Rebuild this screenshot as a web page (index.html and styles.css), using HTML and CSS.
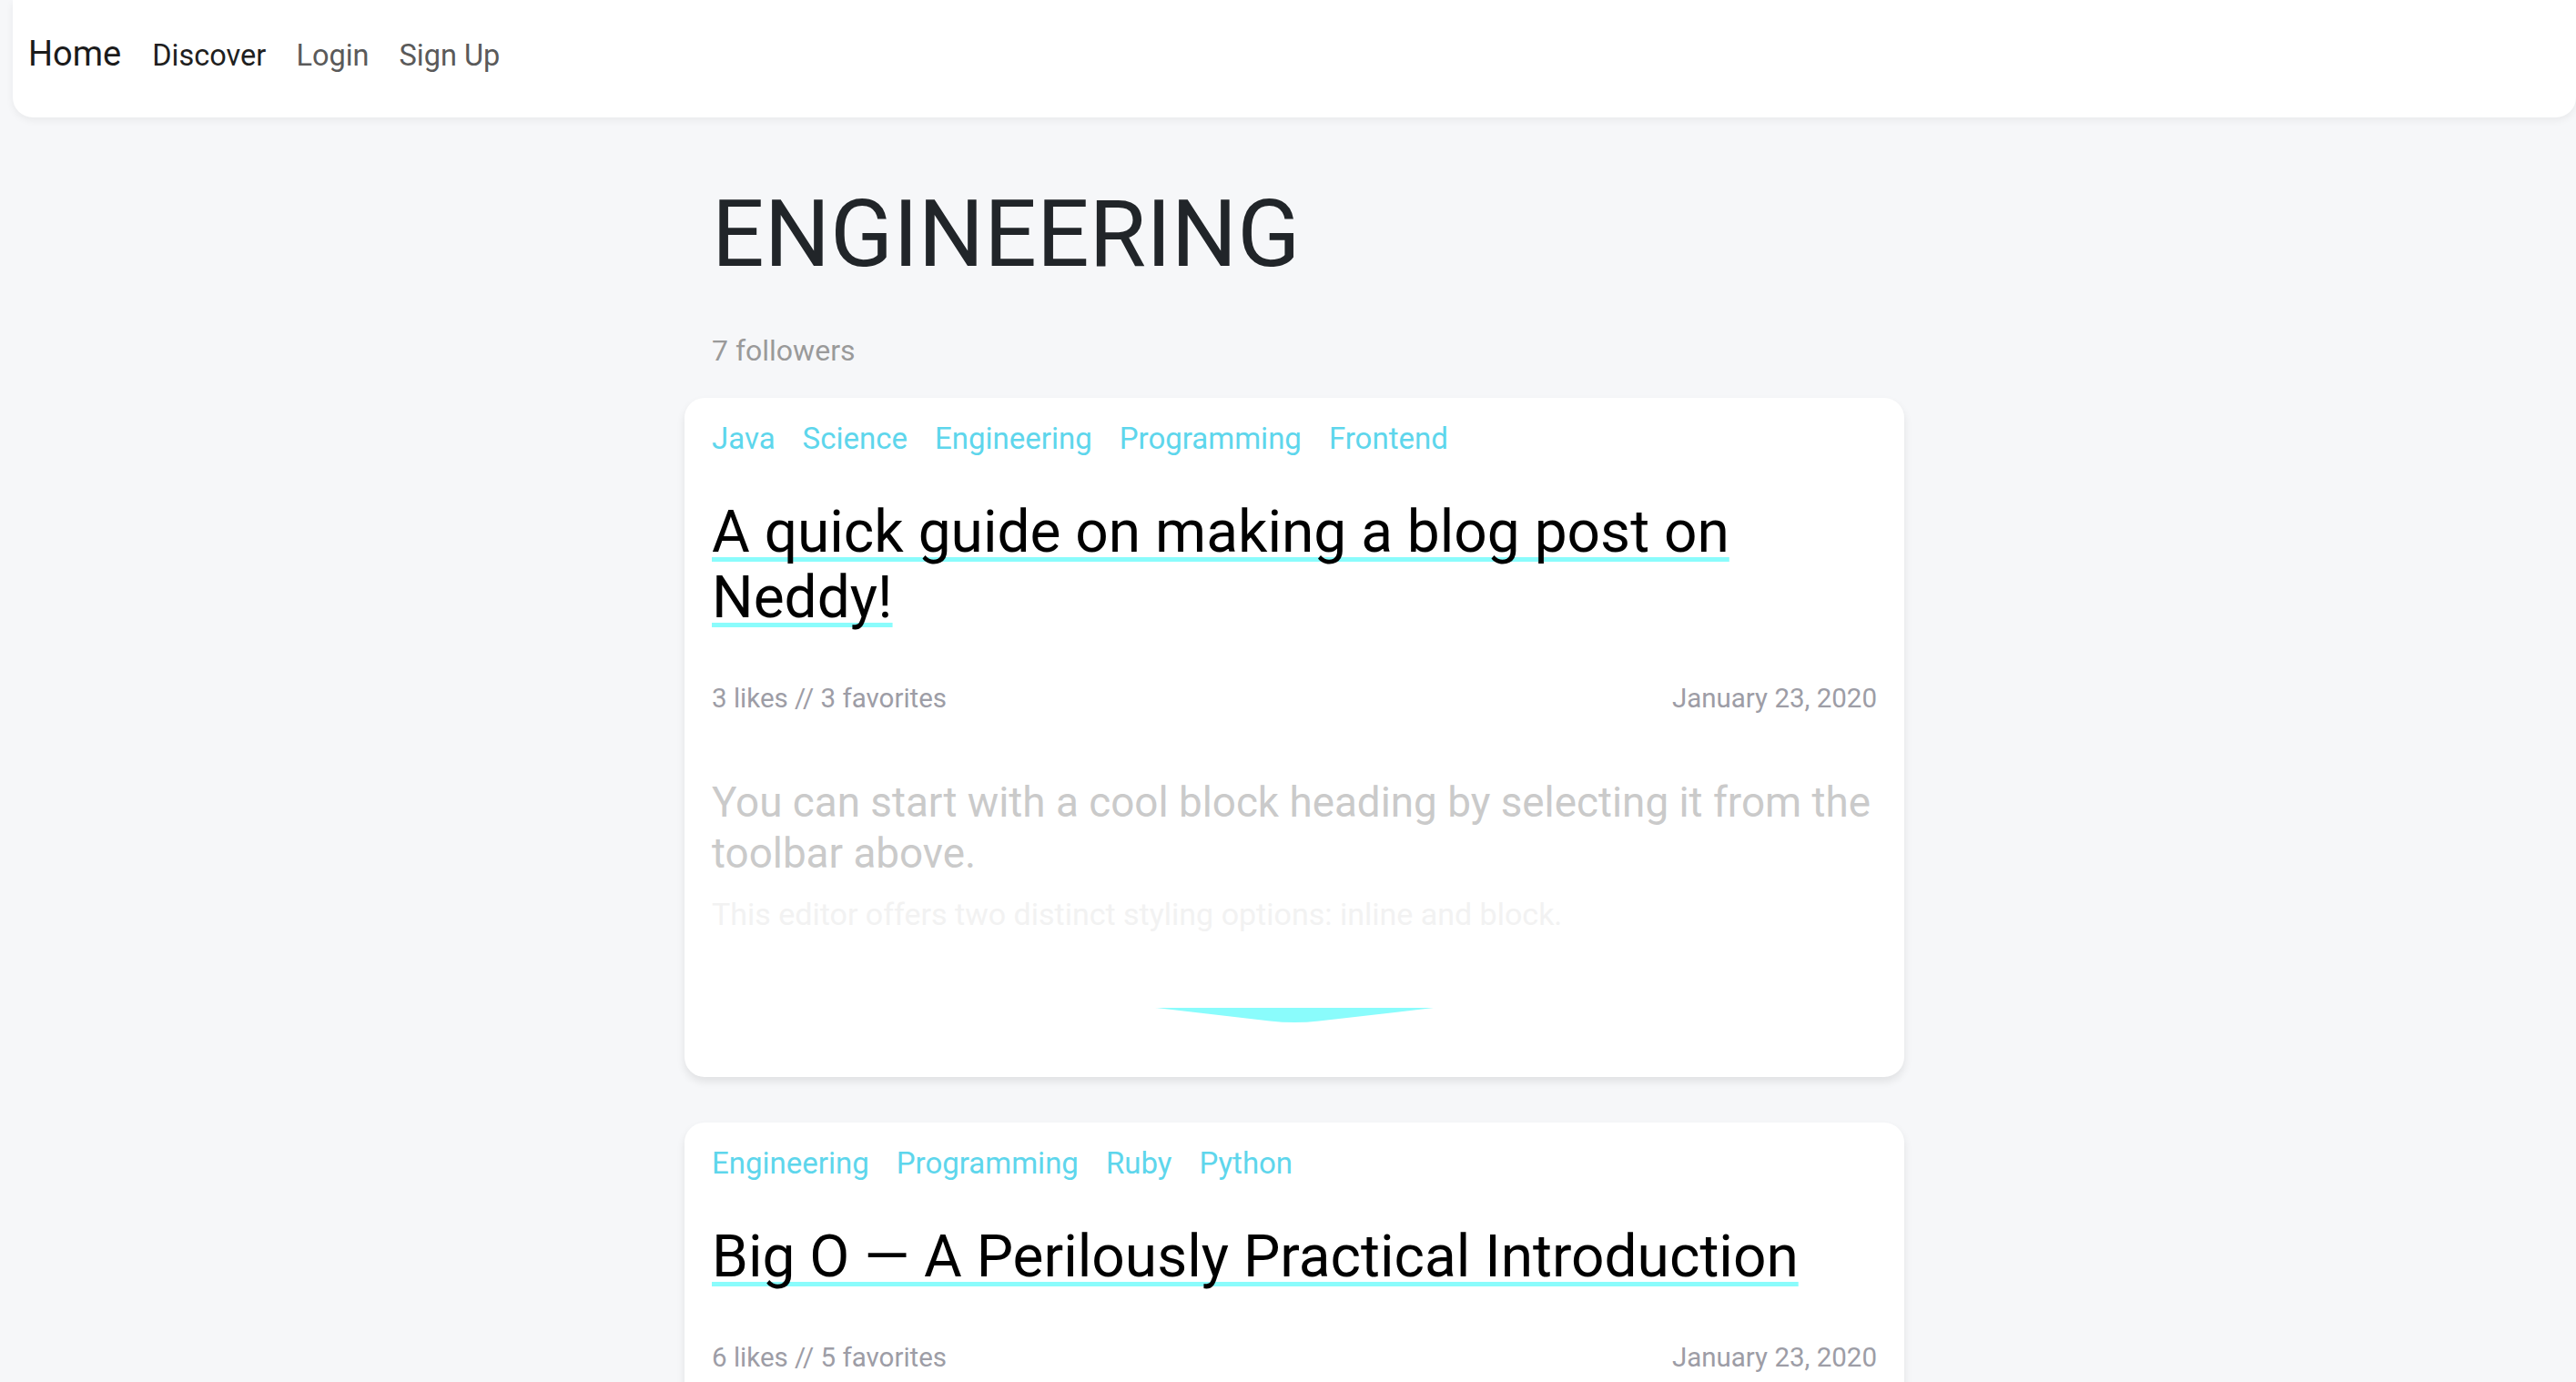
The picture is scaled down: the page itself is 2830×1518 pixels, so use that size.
FILE: index.html
```html
<!DOCTYPE html>
<html lang="en">
<head>
<meta charset="utf-8">
<title>Engineering</title>
<link rel="stylesheet" href="styles.css">
</head>
<body>
<nav class="navbar">
  <a class="brand" href="#">Home</a>
  <a class="nav-link active" href="#">Discover</a>
  <a class="nav-link" href="#">Login</a>
  <a class="nav-link" href="#">Sign Up</a>
</nav>
<main class="container">
  <header class="page-header">
    <h1 class="topic-title">ENGINEERING</h1>
    <div class="followers">7 followers</div>
  </header>

  <article class="card">
    <div class="tags">
      <a href="#" class="tag">Java</a>
      <a href="#" class="tag">Science</a>
      <a href="#" class="tag">Engineering</a>
      <a href="#" class="tag">Programming</a>
      <a href="#" class="tag">Frontend</a>
    </div>
    <h2 class="post-title"><a href="#">A quick guide on making a blog post on Neddy!</a></h2>
    <div class="meta">
      <span>3 likes // 3 favorites</span>
      <span>January 23, 2020</span>
    </div>
    <div class="excerpt">
      <h3 class="excerpt-heading">You can start with a cool block heading by selecting it from the toolbar above.</h3>
      <p class="excerpt-text">This editor offers two distinct styling options: inline and block.</p>
    </div>
    <div class="expand">
      <svg class="chevron" width="306" height="17" viewBox="0 0 306 17" aria-hidden="true">
        <path d="M0 0 H306 L180 14.6 Q153 17.6 126 14.6 Z" fill="#8afcfc"/>
      </svg>
    </div>
  </article>

  <article class="card">
    <div class="tags">
      <a href="#" class="tag">Engineering</a>
      <a href="#" class="tag">Programming</a>
      <a href="#" class="tag">Ruby</a>
      <a href="#" class="tag">Python</a>
    </div>
    <h2 class="post-title"><a href="#">Big O — A Perilously Practical Introduction</a></h2>
    <div class="meta">
      <span>6 likes // 5 favorites</span>
      <span>January 23, 2020</span>
    </div>
    <div class="excerpt">
      <h3 class="excerpt-heading">Big O notation describes how the running time of an algorithm grows with its input.</h3>
    </div>
  </article>
</main>
</body>
</html>
```

FILE: styles.css
```css
* { box-sizing: border-box; }

html, body {
  margin: 0;
  padding: 0;
}

body {
  padding-left: 14px;
  background: #f6f7f9;
  font-family: Roboto, "Liberation Sans", sans-serif;
  color: #212529;
}

a { text-decoration: none; }

.navbar {
  display: flex;
  align-items: baseline;
  gap: 33px;
  height: 129px;
  padding: 40px 0 0 17px;
  background: #ffffff;
  border-radius: 0 0 22px 22px;
  box-shadow: 0 3px 8px rgba(0, 0, 0, 0.06);
}

.brand {
  font-size: 38px;
  line-height: 38px;
  color: #1b1b1b;
  margin-right: 1px;
}

.nav-link {
  font-size: 32.5px;
  line-height: 32px;
  color: #5a5a5a;
}

.nav-link.active { color: #1f1f1f; }

.container {
  width: 1340px;
  margin: 0 auto;
  padding-bottom: 60px;
}

.page-header {
  padding: 68px 30px 0;
}

.topic-title {
  margin: 0;
  font-size: 101.5px;
  line-height: 121px;
  font-weight: 400;
  color: #212529;
}

.followers {
  margin-top: 44px;
  font-size: 32px;
  line-height: 46px;
  color: #9a9a9a;
}

.card {
  margin-top: 29px;
  background: #ffffff;
  border-radius: 22px;
  padding: 21px 30px 59px;
  box-shadow: 0 5px 10px rgba(0, 0, 0, 0.09);
}

.card + .card { margin-top: 50px; }

.tags {
  display: flex;
  gap: 30px;
  font-size: 33px;
  line-height: 48px;
}

.tag { color: #5ed6ec; }

.post-title {
  margin: 43px 0 0;
  font-size: 64px;
  line-height: 72px;
  font-weight: 400;
}

.post-title a {
  color: #000000;
  text-decoration: underline;
  text-decoration-color: #8afcfc;
  text-decoration-thickness: 5px;
  text-underline-offset: 6px;
  text-decoration-skip-ink: none;
}

.meta {
  display: flex;
  justify-content: space-between;
  margin-top: 53px;
  font-size: 29.5px;
  line-height: 43px;
  color: #9d9da6;
}

.excerpt {
  margin-top: 65px;
}

.excerpt-heading {
  margin: 0;
  font-size: 45.8px;
  line-height: 56px;
  font-weight: 400;
  color: #cacaca;
}

.excerpt-text {
  margin: 15px 0 0;
  font-size: 34px;
  line-height: 46px;
  color: #f2f2f2;
}

.expand {
  display: flex;
  justify-content: center;
  margin-top: 80px;
}

.chevron { display: block; }
```
